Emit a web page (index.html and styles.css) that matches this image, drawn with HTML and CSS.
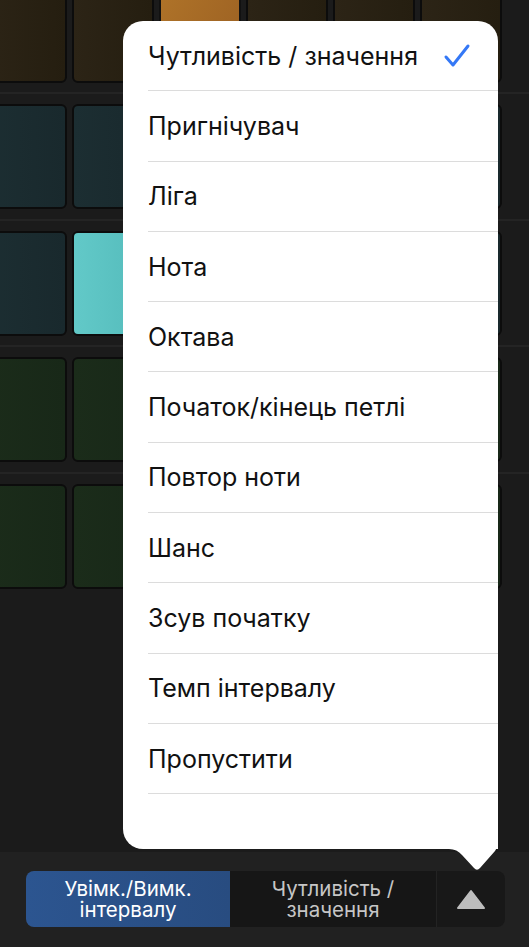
FILE: index.html
```html
<!DOCTYPE html>
<html lang="uk">
<head>
    <meta charset="UTF-8">
    <meta name="viewport" content="width=device-width, initial-scale=1.0">
    <title>Режим кроку</title>
    <link rel="stylesheet" href="styles.css">
</head>
<body>

    <div class="screen">
        <div class="lanes">
            <div class="lane-stack">
                <div class="lane lane-brown">
                    <div class="pad"></div>
                    <div class="pad"></div>
                    <div class="pad pad-orange"></div>
                    <div class="pad"></div>
                    <div class="pad"></div>
                    <div class="pad"></div>
                </div>
                <div class="lane lane-teal">
                    <div class="pad"></div>
                    <div class="pad"></div>
                    <div class="pad"></div>
                    <div class="pad"></div>
                    <div class="pad"></div>
                    <div class="pad"></div>
                </div>
                <div class="lane lane-teal">
                    <div class="pad"></div>
                    <div class="pad pad-cyan"></div>
                    <div class="pad"></div>
                    <div class="pad"></div>
                    <div class="pad"></div>
                    <div class="pad"></div>
                </div>
                <div class="lane lane-green">
                    <div class="pad"></div>
                    <div class="pad"></div>
                    <div class="pad"></div>
                    <div class="pad"></div>
                    <div class="pad"></div>
                    <div class="pad"></div>
                </div>
                <div class="lane lane-green">
                    <div class="pad"></div>
                    <div class="pad"></div>
                    <div class="pad"></div>
                    <div class="pad"></div>
                    <div class="pad"></div>
                    <div class="pad"></div>
                </div>
            </div>
        </div>

        <div class="toolbar">
            <div class="segmented">
                <button class="seg seg-active">Увімк./Вимк.<br>інтервалу</button>
                <button class="seg">Чутливість /<br>значення</button>
                <button class="seg seg-icon">
                    <svg width="30" height="21" viewBox="0 0 30 21">
                        <polygon points="15,2 28,19 2,19" fill="#bdbdbd" stroke="#bdbdbd" stroke-width="2" stroke-linejoin="round"/>
                    </svg>
                </button>
            </div>
        </div>

        <!-- меню параметрів -->
        <div class="popover">
            <ul class="menu">
                <li class="menu-item checked">
                    <span>Чутливість / значення</span>
                    <svg class="check" width="28" height="26" viewBox="0 0 28 26">
                        <path d="M3 14 L10 22 L25 3" fill="none" stroke="#3478f6" stroke-width="3" stroke-linecap="round" stroke-linejoin="round"/>
                    </svg>
                </li>
                <li class="menu-item"><span>Пригнічувач</span></li>
                <li class="menu-item"><span>Ліга</span></li>
                <li class="menu-item"><span>Нота</span></li>
                <li class="menu-item"><span>Октава</span></li>
                <li class="menu-item"><span>Початок/кінець петлі</span></li>
                <li class="menu-item"><span>Повтор ноти</span></li>
                <li class="menu-item"><span>Шанс</span></li>
                <li class="menu-item"><span>Зсув початку</span></li>
                <li class="menu-item"><span>Темп інтервалу</span></li>
                <li class="menu-item"><span>Пропустити</span></li>
            </ul>
            <svg class="popover-arrow" width="55" height="33" viewBox="0 0 55 33">
                <path d="M0 0 H55 V4 Q55 8 52 12 L37 29 Q34 32.5 31 29 L19 16 Q14 10 6 10 H0 Z" fill="#ffffff"/>
            </svg>
        </div>
    </div>

</body>
</html>
```

FILE: styles.css
```css
body {
    margin: 0;
    background-color: #1b1b1b;
    font-family: "Inter", "Liberation Sans", sans-serif;
}

.screen {
    position: relative;
    display: flex;
    flex-direction: column;
    height: 947px;
    overflow: hidden;
}

/* сітка кроків */
.lanes {
    flex: 1;
    min-height: 0;
    overflow: hidden;
}

.lane-stack {
    margin-top: -34.5px;
}

.lane {
    display: flex;
    gap: 5px;
    margin-left: -15px;
    padding: 10px 0 9.5px 0;
    border-top: 2px solid #242424;
}

.pad {
    flex: none;
    box-sizing: border-box;
    width: 82px;
    height: 105px;
    border: 2px solid #0c0c0c;
    border-radius: 6px;
}

.lane-brown .pad {
    background: linear-gradient(90deg, #2c2416, #251e10);
}

.lane-teal .pad {
    background: linear-gradient(90deg, #1c2e32, #19292d);
}

.lane-green .pad {
    background: linear-gradient(90deg, #1b2c1a, #182818);
}

.lane .pad-orange {
    border-color: #111;
    background: linear-gradient(120deg, #b07429, #9a5f22);
}

.lane .pad-cyan {
    background: linear-gradient(90deg, #62c9c8, #53baba);
}

/* нижня панель */
.toolbar {
    flex: none;
    height: 95px;
    box-sizing: border-box;
    padding: 19px 24px 20px 26px;
    background-color: #212121;
}

.segmented {
    display: flex;
    height: 56px;
    border-radius: 8px;
    overflow: hidden;
}

.seg {
    margin: 0;
    padding: 0;
    border: none;
    font-family: "Inter", "Liberation Sans", sans-serif;
    font-size: 20.5px;
    line-height: 21px;
    color: #c6c6c6;
    background-color: #161616;
    text-align: center;
}

.seg-active {
    width: 204px;
    color: white;
    background: linear-gradient(90deg, #2c5590, #284c80);
}

.seg:nth-child(2) {
    width: 206px;
}

.seg-icon {
    display: flex;
    align-items: center;
    justify-content: center;
    width: 69px;
    background-color: #181818;
    border-left: 1px solid #232323;
}

/* спливне меню */
.popover {
    position: absolute;
    top: 21px;
    left: 123px;
    width: 375px;
    height: 828px;
    background: white;
    border-radius: 20px 20px 0 20px;
}

.popover-arrow {
    position: absolute;
    left: 320px;
    top: 818px;
}

.menu {
    margin: 0;
    padding: 0;
    list-style: none;
}

.menu-item {
    display: flex;
    align-items: center;
    justify-content: space-between;
    box-sizing: border-box;
    height: 70.3px;
    margin-left: 25px;
    padding-right: 27px;
    border-bottom: 1px solid #dcdcdc;
    font-size: 25px;
    color: #111;
}
```
